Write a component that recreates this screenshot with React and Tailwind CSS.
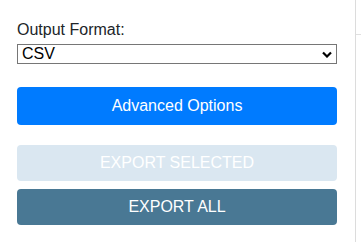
export default function App() {
  return (
    <div className="flex h-[242px] w-[361px] bg-white font-['Liberation_Sans',Arial,sans-serif]">
      {/* Panel */}
      <div className="w-[356px] shrink-0 border-r border-[#dcdcdc] px-[17px] pt-[20px]">
        <label className="block text-[16px] leading-[19px] text-[#212529]">Output Format:</label>
        <select
          defaultValue="csv"
          className="mt-[5px] block h-[20px] w-[320px] appearance-none border border-[#767676] bg-white pl-[4px] text-[16px] leading-[18px] text-black"
          style={{
            backgroundImage:
              "url(\"data:image/svg+xml;utf8,<svg xmlns='http://www.w3.org/2000/svg' width='10' height='7' viewBox='0 0 10 7'><path d='M1 1.5 L5 5.5 L9 1.5' fill='none' stroke='black' stroke-width='2.2'/></svg>\")",
            backgroundRepeat: "no-repeat",
            backgroundPosition: "right 4px center",
          }}
        >
          <option value="csv">CSV</option>
          <option value="json">JSON</option>
          <option value="xlsx">XLSX</option>
        </select>

        <button className="mt-[23px] flex h-[38px] w-[320px] items-center justify-center rounded-[4px] bg-[#007bff] text-[16px] text-white">
          Advanced Options
        </button>

        <button
          disabled
          className="mt-[20px] flex h-[36px] w-[320px] items-center justify-center rounded-[4px] bg-[#dae7f1] text-[16px] text-white"
        >
          EXPORT SELECTED
        </button>

        <button className="mt-[8px] flex h-[36px] w-[320px] items-center justify-center rounded-[4px] bg-[#497894] text-[16px] text-white">
          EXPORT ALL
        </button>
      </div>
      {/* Edge of neighbouring pane */}
      <div className="flex-1 pt-[34px]">
        <div className="h-px bg-[#e0e0e0]" />
      </div>
    </div>
  );
}
